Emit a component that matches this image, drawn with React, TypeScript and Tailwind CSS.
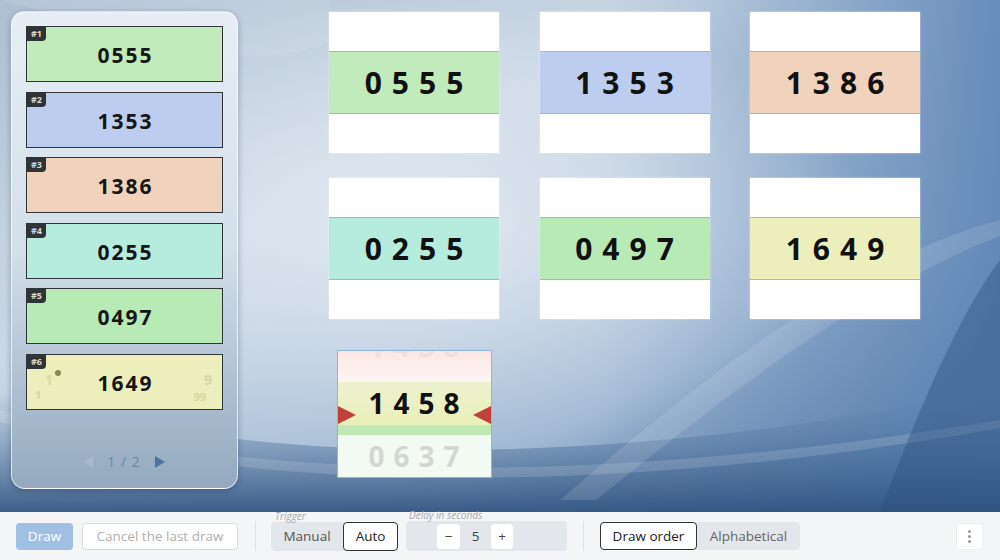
type Draw = { n: number; code: string; color: string }

const draws: Draw[] = [
	{ n: 1, code: "0555", color: "bg-[#c2ebbb]" },
	{ n: 2, code: "1353", color: "bg-[#bccdef]" },
	{ n: 3, code: "1386", color: "bg-[#f1d2bd]" },
	{ n: 4, code: "0255", color: "bg-[#b6ecdd]" },
	{ n: 5, code: "0497", color: "bg-[#b8eab6]" },
	{ n: 6, code: "1649", color: "bg-[#ecefbb]" },
]

const Wallpaper = () => (
	<svg className="absolute inset-0 h-full w-full" viewBox="0 0 1000 512" preserveAspectRatio="none">
		<defs>
			<linearGradient id="base" x1="0" y1="0" x2="1" y2="1">
				<stop offset="0" stopColor="#aebfd2" />
				<stop offset="0.35" stopColor="#cbd8e5" />
				<stop offset="0.7" stopColor="#9db6d2" />
				<stop offset="1" stopColor="#33598a" />
			</linearGradient>
			<radialGradient id="glow" cx="0.42" cy="0.45" r="0.45">
				<stop offset="0" stopColor="#e4ebf3" stopOpacity="0.9" />
				<stop offset="1" stopColor="#e4ebf3" stopOpacity="0" />
			</radialGradient>
			<linearGradient id="bottom" x1="0" y1="0" x2="0" y2="1">
				<stop offset="0" stopColor="#5b80aa" stopOpacity="0" />
				<stop offset="1" stopColor="#2f5280" stopOpacity="0.9" />
			</linearGradient>
			<linearGradient id="right" x1="0" y1="0" x2="1" y2="0">
				<stop offset="0" stopColor="#6f93be" stopOpacity="0" />
				<stop offset="1" stopColor="#5f86b6" stopOpacity="0.9" />
			</linearGradient>
		</defs>
		<rect width="1000" height="512" fill="url(#base)" />
		<rect x="600" width="400" height="512" fill="url(#right)" />
		<rect width="1000" height="512" fill="url(#glow)" />
		<path d="M0 390 C 250 470, 600 470, 1000 390 L 1000 512 L 0 512 Z" fill="url(#bottom)" />
		<path d="M0 410 C 300 500, 700 470, 1000 420 L 1000 428 C 700 482, 300 508, 0 422 Z" fill="#ffffff" opacity="0.14" />
		<path d="M560 500 C 700 380, 850 260, 1000 220 L 1000 236 C 860 290, 720 400, 596 500 Z" fill="#ffffff" opacity="0.12" />
		<path d="M880 512 C 915 420, 955 320, 1000 260 L 1000 512 Z" fill="#2b4d7c" opacity="0.4" />
		<path d="M0 0 C 150 40, 250 80, 330 40 L 330 0 Z" fill="#ffffff" opacity="0.1" />
	</svg>
)

const SideCard = ({ d }: { d: Draw }) => (
	<div className={`relative h-[56px] border border-[#2f3437] ${d.color} flex items-center justify-center`}>
		<span className="absolute left-0 top-0 h-[14px] rounded-br-[4px] bg-[#2f3437] px-[4px] text-[9px] font-bold leading-[14px] text-[#d8d8d8]">
			#{d.n}
		</span>
		{d.n === 6 && (
			<>
				<span className="absolute left-[28px] top-[15px] h-[6px] w-[6px] rounded-full bg-[#8c8a4a]" />
				<span className="absolute left-[18px] top-[18px] text-[14px] font-bold leading-none text-[#d9da9a]">1</span>
				<span className="absolute left-[8px] top-[34px] text-[11px] font-bold leading-none text-[#d3d59a]">1</span>
				<span className="absolute right-[10px] top-[18px] text-[14px] font-bold leading-none text-[#d5d69c]">9</span>
				<span className="absolute right-[16px] top-[36px] text-[11px] font-bold leading-none text-[#d5d69c]">99</span>
			</>
		)}
		<span className="relative pl-[2px] pt-[4px] text-[21px] font-bold tracking-[2px] text-[#161616]">{d.code}</span>
	</div>
)

const GridCard = ({ d }: { d: Draw }) => (
	<div className="flex h-[141px] w-[170px] flex-col bg-white shadow-[0_0_2px_rgba(255,255,255,0.6)]">
		<div className="h-[39px]" />
		<div
			className={`flex h-[63px] items-center justify-center border-y border-[#b3b3ad] ${d.color} pl-[10px] text-[30px] font-bold tracking-[10px] text-[#111]`}
		>
			{d.code}
		</div>
		<div className="h-[39px]" />
	</div>
)

const Drum = () => (
	<div className="relative mx-auto mt-[6px] flex h-[128px] w-[155px] flex-col overflow-hidden border border-[#8db5df] bg-white">
		<div className="relative h-[34px] overflow-hidden bg-gradient-to-b from-[#fbe7e6] to-[#fdf5f2]">
			<span className="absolute -top-[26px] left-0 right-0 pl-[9px] text-center text-[28px] font-bold tracking-[9px] text-[#efdedd]">
				1458
			</span>
		</div>
		<div className="flex h-[48px] items-center justify-center bg-gradient-to-b from-[#edf2cf] to-[#e9efb8] pl-[9px] text-[28px] font-bold tracking-[9px] text-[#111]">
			1458
		</div>
		<div className="h-[11px] bg-[#bfe8b4]" />
		<div className="flex flex-1 items-center justify-center bg-[#f2fbf1] pl-[9px] text-[28px] font-bold tracking-[9px] text-[#d4d6d4]">
			0637
		</div>
		<span className="absolute left-0 top-[55px] h-0 w-0 border-y-[9px] border-l-[18px] border-y-transparent border-l-[#c2403a]" />
		<span className="absolute right-0 top-[55px] h-0 w-0 border-y-[9px] border-r-[18px] border-y-transparent border-r-[#c2403a]" />
	</div>
)

const App = () => {
	return (
		<div className="flex h-[560px] w-[1000px] flex-col overflow-hidden font-['Open_Sans',sans-serif]">
			<div className="relative flex h-[512px]">
				<Wallpaper />
				<div className="relative ml-[11px] mt-[11px] flex h-[478px] w-[227px] flex-col rounded-[14px] border border-white/70 bg-gradient-to-b from-[#e7eef5] via-[#d3dfea] to-[#94a9bf] px-[14px] pt-[14px] shadow-[0_2px_6px_rgba(30,50,80,0.35)]">
					<div className="flex flex-col gap-[9.5px]">
						{draws.map((d) => (
							<SideCard key={d.n} d={d} />
						))}
					</div>
					<div className="mt-auto mb-[16px] flex items-center justify-center gap-[14px] text-[14px] text-[#6e87a3]">
						<span className="h-0 w-0 border-y-[6px] border-r-[9px] border-y-transparent border-r-[#a9bbcd]" />
						<span className="tracking-[1px]">1 / 2</span>
						<span className="h-0 w-0 border-y-[6px] border-l-[10px] border-y-transparent border-l-[#4f74a0]" />
					</div>
				</div>
				<div className="relative ml-[91px] mt-[12px] grid h-fit grid-cols-[170px_170px_170px] gap-x-[40.5px] gap-y-[25px]">
					{draws.map((d) => (
						<GridCard key={d.n} d={d} />
					))}
					<Drum />
				</div>
			</div>
			<div className="flex h-[48px] items-center gap-[9px] bg-[#f4f5f7] px-[16px] text-[13.5px]">
				<button type="button" className="h-[27px] w-[57px] rounded-[4px] bg-[#9fc0e3] text-white">
					Draw
				</button>
				<button type="button" className="h-[27px] w-[156px] rounded-[4px] border border-[#dcdcdc] bg-white text-[#b0b0b0]">
					Cancel the last draw
				</button>
				<div className="ml-[8px] mr-[6px] h-[30px] w-px bg-[#e0e0e0]" />
				<div className="relative flex h-[29px] w-[127px] rounded-[4px] bg-[#e3e6ea]">
					<span className="absolute -top-[13px] left-[4px] text-[10px] italic text-[#a8a8a8]">Trigger</span>
					<button type="button" className="flex-1 text-[#555]">
						Manual
					</button>
					<button type="button" className="w-[55px] rounded-[4px] border border-[#333] bg-white text-[#222]">
						Auto
					</button>
				</div>
				<div className="relative ml-[-1px] flex h-[30px] w-[161px] items-center rounded-[4px] bg-[#e3e6ea] pl-[31px]">
					<span className="absolute -top-[13px] left-[3px] text-[10px] italic text-[#a8a8a8]">Delay in seconds</span>
					<button type="button" className="h-[25px] w-[23px] rounded-[4px] bg-white text-[#444]">
						−
					</button>
					<span className="w-[31px] text-center text-[#444]">5</span>
					<button type="button" className="h-[25px] w-[22px] rounded-[4px] bg-white text-[#444]">
						+
					</button>
				</div>
				<div className="ml-[7px] mr-[7px] h-[30px] w-px bg-[#e0e0e0]" />
				<div className="flex h-[28px] w-[200px] rounded-[4px] bg-[#e3e6ea]">
					<button type="button" className="w-[97px] rounded-[4px] border border-[#333] bg-white text-[#222]">
						Draw order
					</button>
					<button type="button" className="flex-1 text-[#666]">
						Alphabetical
					</button>
				</div>
				<button
					type="button"
					className="ml-auto mr-[1px] flex h-[27px] w-[27px] flex-col items-center justify-center gap-[2px] rounded-[4px] border border-[#eee] bg-white"
				>
					<span className="h-[3px] w-[3px] rounded-full bg-[#999]" />
					<span className="h-[3px] w-[3px] rounded-full bg-[#999]" />
					<span className="h-[3px] w-[3px] rounded-full bg-[#999]" />
				</button>
			</div>
		</div>
	)
}

export default App
